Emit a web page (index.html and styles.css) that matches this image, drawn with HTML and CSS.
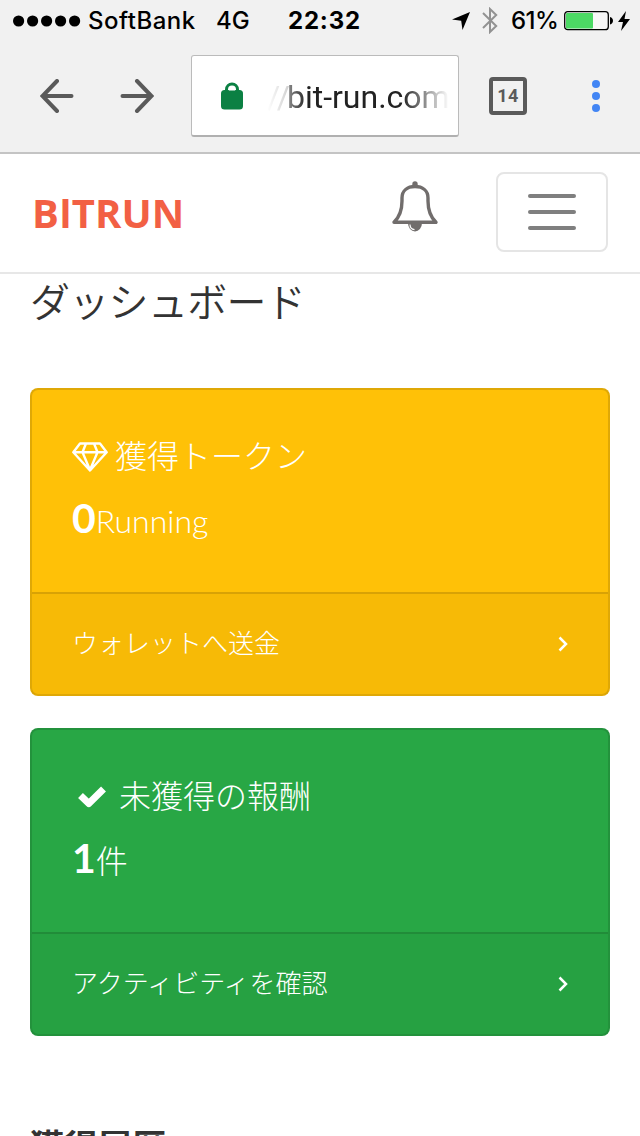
FILE: index.html
```html
<!DOCTYPE html>
<html lang="ja">
<head>
	<meta charset="utf-8">
	<title>BITRUN</title>
	<link rel="stylesheet" href="styles.css">
</head>
<body>

<div class="status">
	<svg class="signal" width="68" height="12" viewBox="0 0 68 12">
		<circle cx="5.6" cy="6" r="5.6"/>
		<circle cx="19.6" cy="6" r="5.6"/>
		<circle cx="33.6" cy="6" r="5.6"/>
		<circle cx="47.6" cy="6" r="5.6"/>
		<circle cx="61.6" cy="6" r="5.6"/>
	</svg>
	<span class="carrier">SoftBank</span>
	<span class="network">4G</span>
	<span class="clock">22:32</span>
	<svg class="location" width="18" height="18" viewBox="0 0 18 18"><path d="M18 0L0 7.5L9.2 8.8L10.5 18Z"/></svg>
	<svg class="bluetooth" width="16" height="27" viewBox="0 0 16 27"><path d="M1 6L14.2 19L8 25V2L14.2 8L1 21" fill="none" stroke="#929292" stroke-width="2"/></svg>
	<span class="percent">61%</span>
	<svg class="battery" width="50" height="20" viewBox="0 0 50 20">
		<rect x="0.7" y="0.7" width="43.6" height="18" rx="3" fill="#f7f7f7" stroke="#000" stroke-width="1.3"/>
		<rect x="2" y="2" width="27" height="15.4" rx="1" fill="#4cd964"/>
		<path d="M46 6C50 7 50 12.500 46 13.500Z"/>
	</svg>
	<svg class="charge" width="12" height="20" viewBox="0 0 12 20"><path d="M8 0L0 11H5L3 20L12 8H6.500Z"/></svg>
</div>

<div class="toolbar">
	<svg class="arrow" width="34" height="34" viewBox="0 0 34 34"><path d="M31.500 17H3M17 2L2.500 17L17 32"/></svg>
	<svg class="arrow next" width="34" height="34" viewBox="0 0 34 34"><path d="M2.500 17H31M17 2L31.500 17L17 32"/></svg>
	<div class="address">
		<svg class="lock" width="22" height="28" viewBox="0 0 22 28">
			<path d="M5.500 10V7.500a5.500 5.500 0 0 1 11 0V10" fill="none" stroke="#0b8043" stroke-width="3"/>
			<rect x="0" y="8" width="22" height="19.500" rx="3.500" fill="#0b8043"/>
			<path d="M7.800 8.500a3.200 3.200 0 0 1 6.400 0Z" fill="#fff"/>
		</svg>
		<span class="url"><span class="scheme">//</span>bit-run.com</span>
	</div>
	<div class="tabs">14</div>
	<svg class="more" width="8" height="32" viewBox="0 0 8 32">
		<circle cx="4" cy="4" r="4"/>
		<circle cx="4" cy="16" r="4"/>
		<circle cx="4" cy="28" r="4"/>
	</svg>
</div>

<div class="navbar">
	<a class="brand">B<span>I</span>TRUN</a>
	<svg class="bell" width="48" height="52" viewBox="0 0 48 52">
		<path d="M3 41.300C8 36.500 11 31 11 20V17C11 9.500 16.500 5.500 24 5.500S37 9.500 37 17V20C37 31 40 36.500 45 41.300Z" fill="none" stroke="#716d6c" stroke-width="3.400" stroke-linejoin="round"/>
		<path d="M21.300 6V3a2.700 2.700 0 0 1 5.400 0V6Z"/>
		<path d="M17 42H31a7 8.500 0 0 1-14 0Z"/>
		<path d="M19 43.500C19 46.500 20.500 48.300 23.500 48.700" fill="none" stroke="#fff" stroke-width="1.200"/>
	</svg>
	<div class="toggler">
		<span></span>
		<span></span>
		<span></span>
	</div>
</div>

<div class="content">
	<h1>ダッシュボード</h1>

	<div class="card token">
		<div class="card-body">
			<div class="card-title">
				<svg class="diamond" width="36" height="30" viewBox="0 0 36 30"><path d="M8 1.500H28L34.700 10.300L18 28.500L1.300 10.300ZM1.300 10.300H34.700M14 1.500L10.500 10.300L18 28L25.500 10.300L22 1.500"/></svg>
				<span>獲得トークン</span>
			</div>
			<div class="amount"><b>0</b>Running</div>
		</div>
		<div class="card-footer">
			<span>ウォレットへ送金</span>
			<svg class="angle" width="10" height="16" viewBox="0 0 10 16"><path d="M1.500 1.500L8 8L1.500 14.500"/></svg>
		</div>
	</div>

	<div class="card reward">
		<div class="card-body">
			<div class="card-title">
				<svg class="check" width="28" height="22" viewBox="0 0 28 22"><path d="M2.500 9.500L10.800 17.500L25.500 3" stroke-linejoin="round"/></svg>
				<span>未獲得の報酬</span>
			</div>
			<div class="amount"><b>1</b>件</div>
		</div>
		<div class="card-footer">
			<span>アクティビティを確認</span>
			<svg class="angle" width="10" height="16" viewBox="0 0 10 16"><path d="M1.500 1.500L8 8L1.500 14.500"/></svg>
		</div>
	</div>

	<h2>獲得履歴</h2>
</div>

</body>
</html>
```
FILE: styles.css
```css
*{
	margin: 0;
	padding: 0;
	box-sizing: border-box;
}

body{
	width: 640px;
	height: 1136px;
	overflow: hidden;
	background-color: #fff;
	font-family: Lato, "Noto Sans CJK JP", sans-serif;
	color: #333;
}

svg{
	display: block;
	flex-shrink: 0;
}

/* status bar */
.status{
	height: 40px;
	padding: 1px 0 0 13px;
	display: flex;
	align-items: center;
	background-color: #f1f1f1;
	font: 500 24px/40px Inter, sans-serif;
	color: #000;
	white-space: nowrap;
}

.carrier{
	width: 128px;
	padding-left: 7px;
	letter-spacing: 0.5px;
}

.network{
	width: 72px;
	padding-left: 7px;
}

.clock{
	width: 164px;
	padding-left: 7px;
	font-weight: 700;
	letter-spacing: 0.8px;
}

.location{
	margin-left: 7px;
}

.bluetooth{
	margin-left: 12px;
}

.percent{
	width: 54px;
	padding-left: 13px;
	margin-right: 12px;
	letter-spacing: -0.5px;
}

.charge{
	margin-left: 4px;
}

/* browser toolbar */
.toolbar{
	height: 114px;
	padding: 15px 0 0 40px;
	display: flex;
	align-items: flex-start;
	background-color: #f1f1f1;
	border-bottom: 2px solid #c4c4c4;
}

.arrow{
	margin-top: 24px;
	fill: none;
	stroke: #5a5a5a;
	stroke-width: 4;
	stroke-linecap: round;
}

.next{
	margin-left: 46px;
}

.address{
	width: 268px;
	height: 82px;
	margin-left: 37px;
	padding-left: 29px;
	display: flex;
	align-items: center;
	background-color: #fff;
	border: 1px solid #bbb;
	border-bottom: 2px solid #b0b0b0;
	border-radius: 3px;
}

.url{
	width: 182px;
	margin-left: 24px;
	padding-top: 2px;
	flex-shrink: 0;
	overflow: hidden;
	font: 400 32px/44px Roboto, sans-serif;
	white-space: nowrap;
	color: #222;
	-webkit-mask-image: linear-gradient(90deg, transparent, #000 40px, #000 135px, transparent);
	mask-image: linear-gradient(90deg, transparent, #000 40px, #000 135px, transparent);
}

.scheme{
	margin-right: -3px;
	color: #aaa;
}

.tabs{
	width: 38px;
	height: 38px;
	margin: 22px 0 0 30px;
	border: 4px solid #5a5a5a;
	border-radius: 4px;
	font: 700 18px/30px Roboto, sans-serif;
	letter-spacing: 0.5px;
	text-align: center;
	color: #5a5a5a;
}

.more{
	margin: 25px 0 0 65px;
	fill: #4285f4;
}

/* site header */
.navbar{
	height: 120px;
	padding: 0 32px 0 32px;
	display: flex;
	align-items: flex-start;
	border-bottom: 2px solid #e7e7e7;
}

.brand{
	width: 359px;
	margin-top: 29px;
	font: 700 40px/60px "Open Sans", sans-serif;
	color: #f26044;
}

.brand span{
	padding: 0 1px;
	font-family: Inter, sans-serif;
	font-size: 39px;
}

.bell{
	margin-top: 27px;
	fill: #716d6c;
}

.toggler{
	width: 112px;
	height: 80px;
	margin: 18px 0 0 57px;
	display: flex;
	flex-direction: column;
	align-items: center;
	justify-content: center;
	gap: 12px;
	border: 2px solid #e5e5e5;
	border-radius: 8px;
}

.toggler span{
	width: 48px;
	height: 4px;
	border-radius: 2px;
	background-color: #7f7f7f;
}

.content{
	padding: 0 30px;
}

h1{
	height: 114px;
	font-size: 40px;
	line-height: 57px;
	font-weight: 350;
	letter-spacing: -0.7px;
}

.card{
	height: 308px;
	margin-bottom: 32px;
	border: 2px solid rgba(0, 0, 0, 0.125);
	border-radius: 8px;
	color: #fff;
	font-weight: 300;
}

.token{
	background-color: #ffc107;
}

.reward{
	background-color: #28a745;
}

.card-body{
	height: 202px;
	padding: 40px;
}

.card-title{
	height: 51px;
	display: flex;
	align-items: center;
	font-size: 32px;
}

.card-title span{
	padding-bottom: 4px;
}

.diamond{
	margin: 3px 7px 0 0;
	fill: none;
	stroke: #fff;
	stroke-width: 2.4;
	stroke-linejoin: round;
}

.check{
	margin: 2px 13px 0 6px;
	fill: none;
	stroke: #fff;
	stroke-width: 7;
}

.amount{
	height: 72px;
	font-size: 32px;
	line-height: 73px;
}

.amount b{
	font-size: 41px;
	font-weight: 700;
}

.card-footer{
	height: 102px;
	padding: 0 40px;
	display: flex;
	align-items: center;
	justify-content: space-between;
	border-top: 2px solid rgba(0, 0, 0, 0.125);
	background-color: rgba(0, 0, 0, 0.03);
	font-size: 26px;
}

.card-footer span{
	padding-bottom: 6px;
}

.angle{
	fill: none;
	stroke: #fff;
	stroke-width: 2.5;
}

h2{
	padding-top: 53px;
	font-size: 34px;
	line-height: 50px;
	font-weight: 700;
}
```
